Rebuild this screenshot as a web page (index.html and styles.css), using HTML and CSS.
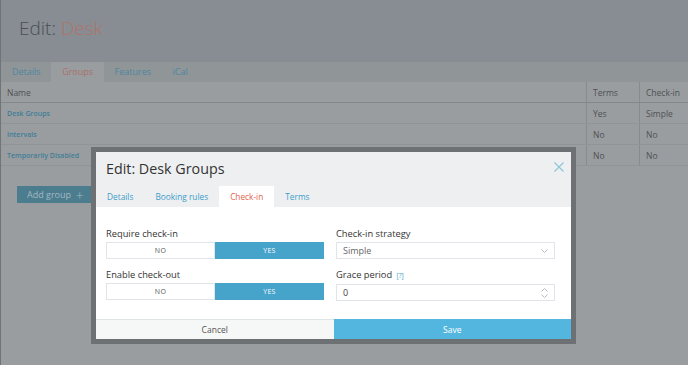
FILE: index.html
```html
<!DOCTYPE html>
<html lang="en">
<head>
  <meta charset="UTF-8" />
  <meta name="viewport" content="width=device-width, initial-scale=1.0" />
  <title>Edit: Desk</title>
  <link rel="stylesheet" href="styles.css">
</head>
<body>
  <div class="page-header">
    <h1>Edit: <span class="accent">Desk</span></h1>
  </div>
  <div class="page-tabs">
    <a class="page-tab">Details</a>
    <a class="page-tab active">Groups</a>
    <a class="page-tab">Features</a>
    <a class="page-tab">iCal</a>
  </div>
  <table class="groups">
    <thead>
      <tr>
        <th>Name</th>
        <th class="col-terms">Terms</th>
        <th class="col-checkin">Check-in</th>
      </tr>
    </thead>
    <tbody>
      <tr>
        <td class="name">Desk Groups</td>
        <td class="col-terms">Yes</td>
        <td class="col-checkin">Simple</td>
      </tr>
      <tr>
        <td class="name">Intervals</td>
        <td class="col-terms">No</td>
        <td class="col-checkin">No</td>
      </tr>
      <tr>
        <td class="name">Temporarily Disabled</td>
        <td class="col-terms">No</td>
        <td class="col-checkin">No</td>
      </tr>
    </tbody>
  </table>
  <button class="add-btn">Add group <span class="plus">+</span></button>

  <div class="modal">
    <div class="modal-head">
      <h2 class="modal-title">Edit: Desk Groups</h2>
      <svg class="close" width="10" height="10" viewBox="0 0 10 10">
        <path d="M0.5 0.5 L9.5 9.5 M9.5 0.5 L0.5 9.5" stroke="#8cc4da" stroke-width="1.1" fill="none" />
      </svg>
      <div class="modal-tabs">
        <a class="modal-tab">Details</a>
        <a class="modal-tab">Booking rules</a>
        <a class="modal-tab active">Check-in</a>
        <a class="modal-tab">Terms</a>
      </div>
    </div>
    <div class="modal-body">
      <div class="field">
        <label>Require check-in</label>
        <div class="toggle"><span>NO</span><span class="on">YES</span></div>
      </div>
      <div class="field">
        <label>Check-in strategy</label>
        <div class="select">
          <span>Simple</span>
          <svg width="7" height="4" viewBox="0 0 7 4"><polyline points="0.5,0.5 3.5,3.5 6.5,0.5" stroke="#aeb6bc" stroke-width="0.9" fill="none" /></svg>
        </div>
      </div>
      <div class="field">
        <label>Enable check-out</label>
        <div class="toggle"><span>NO</span><span class="on">YES</span></div>
      </div>
      <div class="field">
        <label>Grace period <a class="help">[?]</a></label>
        <div class="select input">
          <span>0</span>
          <svg width="7" height="10" viewBox="0 0 7 10">
            <polyline points="0.5,3.5 3.5,0.5 6.5,3.5" stroke="#aeb6bc" stroke-width="0.9" fill="none" />
            <polyline points="0.5,6.5 3.5,9.5 6.5,6.5" stroke="#aeb6bc" stroke-width="0.9" fill="none" />
          </svg>
        </div>
      </div>
    </div>
    <div class="modal-foot">
      <button class="cancel">Cancel</button>
      <button class="save">Save</button>
    </div>
  </div>
</body>
</html>
```

FILE: styles.css
```css
body {
  margin: 0;
  font-family: "Open Sans", sans-serif;
  background-color: #9a9d9f;
  border-left: 1px solid #6f7478;
  min-height: 365px;
  box-sizing: border-box;
  position: relative;
  overflow: hidden;
}
.page-header {
  height: 62px;
  background-color: #878d93;
  display: flex;
  align-items: center;
  padding: 0 0 6px 18px;
  box-sizing: border-box;
}
h1 {
  margin: 0;
  font-size: 19px;
  font-weight: 300;
  color: #4a4f54;
}
.accent {
  color: #b0736b;
}
.page-tabs {
  display: flex;
  height: 20px;
  background-color: #909598;
}
.page-tab {
  padding: 0 10.5px 0 11px;
  line-height: 20px;
  font-size: 9px;
  color: #4d87a0;
}
.page-tab.active {
  background-color: #9a9d9f;
  color: #a8706a;
}
.groups {
  width: 100%;
  border-collapse: collapse;
  font-size: 8.5px;
}
.groups th,
.groups td {
  height: 20px;
  padding: 0 6px;
  text-align: left;
  font-weight: normal;
  color: #4d5155;
  border-bottom: 1px solid #909497;
}
.groups th {
  border-bottom-color: #84888b;
}
.groups .col-terms {
  width: 40px;
  border-left: 1px solid #878b8e;
}
.groups .col-checkin {
  width: 36px;
  border-left: 1px solid #878b8e;
}
.groups td.name {
  font-size: 7px;
  font-weight: 600;
  color: #3f7e98;
}
.add-btn {
  margin: 20px 0 0 16px;
  height: 17px;
  padding: 0 9px 0 10px;
  border: none;
  background-color: #4b7d8f;
  color: #a3b8c1;
  font-family: inherit;
  font-size: 9px;
  display: flex;
  align-items: center;
}
.plus {
  margin-left: 5px;
  font-size: 13px;
  font-weight: 300;
}
.modal {
  position: absolute;
  left: 90px;
  top: 147px;
  width: 475px;
  border: 5px solid #6d7173;
  background-color: #fff;
}
.modal-head {
  position: relative;
  background-color: #eeeff1;
  padding-top: 7px;
}
.modal-title {
  margin: 0 0 7px 10px;
  font-size: 14.3px;
  line-height: 20px;
  font-weight: 400;
  color: #333;
}
.close {
  position: absolute;
  right: 7px;
  top: 10px;
}
.modal-tabs {
  display: flex;
}
.modal-tab {
  padding: 0 11px;
  line-height: 21px;
  font-size: 8.3px;
  color: #3c9dc8;
}
.modal-tab.active {
  background-color: #fff;
  color: #e4634e;
}
.modal-body {
  display: grid;
  grid-template-columns: 218px 219px;
  column-gap: 12px;
  row-gap: 10px;
  padding: 21px 16px 18px 10px;
}
.field label {
  display: block;
  font-size: 9.3px;
  line-height: 12px;
  color: #333;
  margin-bottom: 2px;
}
.help {
  font-size: 6.5px;
  color: #3c9dc8;
  margin-left: 2px;
}
.toggle {
  display: flex;
  height: 17px;
}
.toggle span {
  flex: 1;
  border: 1px solid #e1e5e9;
  font-size: 7px;
  line-height: 15px;
  text-align: center;
  color: #555;
  letter-spacing: 0.3px;
}
.toggle .on {
  background-color: #46a3c9;
  border-color: #46a3c9;
  color: #fff;
}
.select {
  height: 17px;
  box-sizing: border-box;
  border: 1px solid #e1e5e9;
  padding: 0 6px;
  display: flex;
  justify-content: space-between;
  align-items: center;
  font-size: 9px;
  color: #666;
}
.input {
  color: #444;
}
.modal-foot {
  display: flex;
  height: 20px;
}
.modal-foot button {
  flex: 1;
  border: none;
  font-family: inherit;
  font-size: 8.5px;
  padding: 0;
}
.cancel {
  background-color: #f6f7f7;
  border-top: 1px solid #dfe4e7 !important;
  color: #555;
}
.save {
  background-color: #53b6df;
  color: #fff;
}
```
